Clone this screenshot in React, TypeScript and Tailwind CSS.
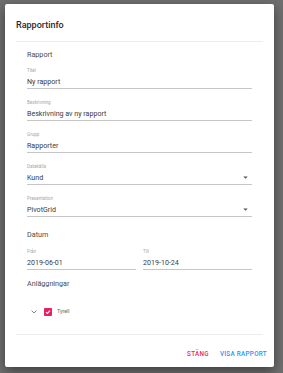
import { ReactNode } from 'react';

const Field = ({ label, value, select, className = '' }: { label: string; value: string; select?: boolean; className?: string }) => (
  <div className={`border-b border-[#c6c6c6] pb-[1px] ${className}`}>
    <div className="text-[4.6px] leading-[7px] text-[#a8a8a8]">{label}</div>
    <div className="mt-[2px] flex items-center justify-between text-[7.1px] leading-[11px] text-[#3a3a3a]">
      <span>{value}</span>
      {select && (
        <svg width="5" height="3" viewBox="0 0 5 3" className="mr-[4px]">
          <path d="M0.3 0.4 L4.7 0.4 L2.5 2.8 Z" fill="#555" />
        </svg>
      )}
    </div>
  </div>
);

const Heading = ({ children, className = '' }: { children: ReactNode; className?: string }) => (
  <div className={`text-[7.2px] leading-[10px] text-[#4a4a4a] ${className}`}>{children}</div>
);

const App = () => {
  return (
    <div
      className="w-[283px] h-[373px] bg-[#6f6f6f] pl-[5px] pt-[4px]"
      style={{ fontFamily: 'Roboto, "Noto Sans", sans-serif' }}
    >
      <div className="w-[269px] h-[363px] bg-white rounded-[2px] shadow-[0_4px_12px_rgba(0,0,0,0.45)] flex flex-col">
        <div className="px-[11px] pt-[14px]">
          <div className="text-[9px] leading-[14px] font-medium text-[#2a2a2a]">Rapportinfo</div>
          <div className="mt-[9px] border-t border-[#ececec]" />

          <div className="mx-[11px]">
            <Heading className="mt-[8px]">Rapport</Heading>
            <Field label="Titel" value="Ny rapport" className="mt-[7px]" />
            <Field label="Beskrivning" value="Beskrivning av ny rapport" className="mt-[10px]" />
            <Field label="Grupp" value="Rapporter" className="mt-[10px]" />
            <Field label="Datakälla" value="Kund" select className="mt-[10px]" />
            <Field label="Presentation" value="PivotGrid" select className="mt-[10px]" />

            <Heading className="mt-[13px]">Datum</Heading>
            <div className="mt-[8px] grid grid-cols-2 gap-[7px]">
              <Field label="Från" value="2019-06-01" />
              <Field label="Till" value="2019-10-24" />
            </div>

            <Heading className="mt-[9px]">Anläggningar</Heading>
            <div className="mt-[18px] flex items-center h-[10px] pl-[4px]">
              <svg width="6" height="4" viewBox="0 0 6 4">
                <path d="M0.6 0.6 L3 3 L5.4 0.6" fill="none" stroke="#777" strokeWidth="0.9" />
              </svg>
              <div className="ml-[7px] w-[8px] h-[8px] rounded-[1px] bg-[#e91e63] flex items-center justify-center">
                <svg width="6" height="6" viewBox="0 0 6 6">
                  <path d="M1 3.1 L2.4 4.4 L5 1.6" fill="none" stroke="#fff" strokeWidth="1.1" />
                </svg>
              </div>
              <span className="ml-[5px] text-[5.3px] text-[#666]">Tyrell</span>
            </div>
          </div>

          <div className="mt-[17px] border-t border-[#ececec]" />
        </div>

        <div className="mt-[13px] flex justify-end items-center gap-[11px] pr-[7px]">
          <button className="h-[14px] text-[6.3px] font-medium tracking-[0.3px] text-[#e91e63] uppercase">Stäng</button>
          <button className="h-[14px] text-[6.3px] font-medium tracking-[0.3px] text-[#2196f3] uppercase">Visa rapport</button>
        </div>
      </div>
    </div>
  );
};

export default App;
